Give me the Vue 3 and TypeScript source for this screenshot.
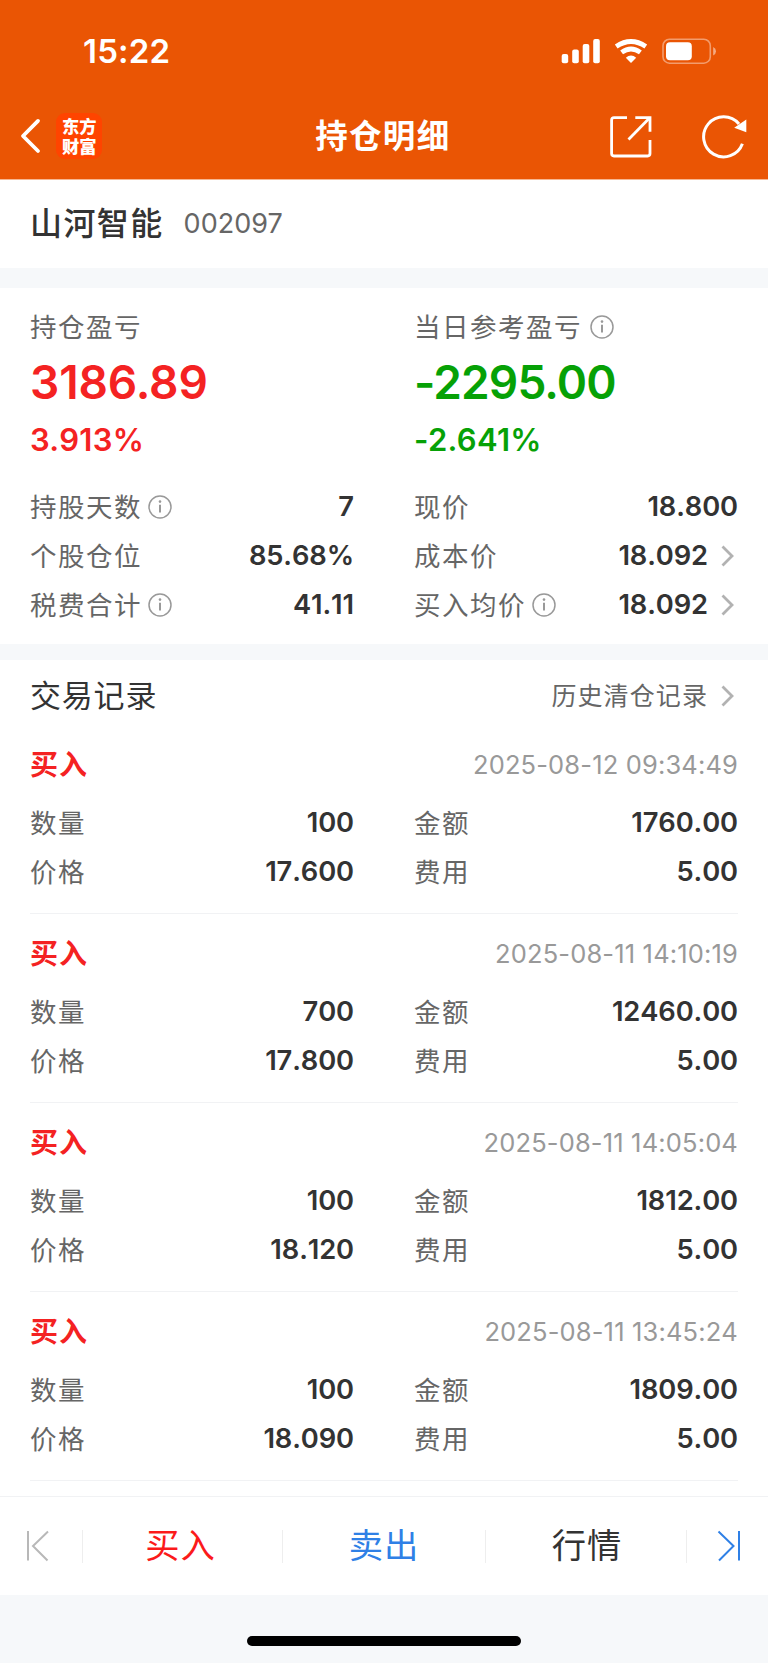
<script setup lang="ts">
interface Metric {
  label: string
  value: string
  info?: boolean
  link?: boolean
}

interface Trade {
  time: string
  fields: Metric[]
}

const metrics: Metric[] = [
  { label: '持股天数', value: '7', info: true },
  { label: '现价', value: '18.800' },
  { label: '个股仓位', value: '85.68%' },
  { label: '成本价', value: '18.092', link: true },
  { label: '税费合计', value: '41.11', info: true },
  { label: '买入均价', value: '18.092', info: true, link: true },
]

function trade(time: string, count: string, amount: string, price: string): Trade {
  return {
    time,
    fields: [
      { label: '数量', value: count },
      { label: '金额', value: amount },
      { label: '价格', value: price },
      { label: '费用', value: '5.00' },
    ],
  }
}

const trades: Trade[] = [
  trade('2025-08-12 09:34:49', '100', '1760.00', '17.600'),
  trade('2025-08-11 14:10:19', '700', '12460.00', '17.800'),
  trade('2025-08-11 14:05:04', '100', '1812.00', '18.120'),
  trade('2025-08-11 13:45:24', '100', '1809.00', '18.090'),
]
</script>

<template>
  <div class="screen">
    <header class="top">
      <div class="status">
        <span class="clock">15:22</span>
        <svg class="status-icons" width="156" height="28" viewBox="0 0 156 28">
          <g fill="#fff">
            <rect x="1.7" y="17" width="6.5" height="9.3" rx="2" />
            <rect x="12.2" y="12.4" width="6.6" height="13.9" rx="2" />
            <rect x="22.7" y="7" width="6.6" height="19.3" rx="2" />
            <rect x="33.2" y="2" width="6.6" height="24.3" rx="2" />
            <path d="M71 26 L65.8 20.8 Q71 16.4 76.2 20.8 Z" />
          </g>
          <path d="M56.2 9.5 Q71 -0.5 85.8 9.5" fill="none" stroke="#fff" stroke-width="4.8" />
          <path d="M61.6 15.4 Q71 8.6 80.4 15.4" fill="none" stroke="#fff" stroke-width="4.8" />
          <rect x="103" y="2.2" width="47.3" height="24" rx="6.5" fill="none" stroke="#fff" stroke-opacity=".42" stroke-width="1.6" />
          <rect x="106" y="5.2" width="25.8" height="18" rx="4" fill="#fff" />
          <path d="M153.2 10 Q156 11.4 156 14.2 Q156 17 153.2 18.4 Z" fill="#fff" fill-opacity=".5" />
        </svg>
      </div>
      <nav class="nav">
        <div class="nav-left">
          <svg class="back" width="22" height="36" viewBox="0 0 22 36">
            <path d="M18 2.9 L3 18 L18 33" fill="none" stroke="#fff" stroke-width="3.8" stroke-linecap="round" stroke-linejoin="round" />
          </svg>
          <div class="logo">东方财富</div>
        </div>
        <h1>持仓明细</h1>
        <div class="nav-right">
          <svg class="share" width="44" height="44" viewBox="0 0 44 44" fill="none" stroke="#fff" stroke-width="2.8">
            <path d="M18 2.6 H5 Q2.6 2.6 2.6 5 V38.6 Q2.6 41 5 41 H38.6 Q41 41 41 38.6 V25" />
            <path d="M26.3 2.6 H41 V16.7" />
            <path d="M41 2.6 L19.5 24.6" />
          </svg>
          <svg width="46" height="46" viewBox="0 0 46 46">
            <path d="M41.4 30.7 A20 20 0 1 1 38 11" fill="none" stroke="#fff" stroke-width="3" />
            <path d="M45.3 6.5 V19.2 L33.2 14.7 Z" fill="#fff" />
          </svg>
        </div>
      </nav>
    </header>

    <section class="stock">
      <h2>山河智能</h2>
      <span class="code">002097</span>
    </section>

    <section class="summary">
      <div class="profits">
        <div class="profit up">
          <div class="label">持仓盈亏</div>
          <div class="big">3186.89</div>
          <div class="rate">3.913%</div>
        </div>
        <div class="profit down">
          <div class="label">
            当日参考盈亏
            <svg class="info wide" width="24" height="24" viewBox="0 0 24 24">
              <circle cx="12" cy="12" r="11" fill="none" stroke="#999" stroke-width="1.5" />
              <path d="M12 9.8 V17.6" stroke="#999" stroke-width="2" />
              <circle cx="12" cy="6.6" r="1.3" fill="#999" />
            </svg>
          </div>
          <div class="big">-2295.00</div>
          <div class="rate">-2.641%</div>
        </div>
      </div>
      <div class="grid">
        <div v-for="m in metrics" :key="m.label" class="cell">
          <span class="label">
            {{ m.label }}
            <svg v-if="m.info" class="info" width="24" height="24" viewBox="0 0 24 24">
              <circle cx="12" cy="12" r="11" fill="none" stroke="#999" stroke-width="1.5" />
              <path d="M12 9.8 V17.6" stroke="#999" stroke-width="2" />
              <circle cx="12" cy="6.6" r="1.3" fill="#999" />
            </svg>
          </span>
          <span class="value">
            {{ m.value }}
            <svg v-if="m.link" class="chevron" width="13" height="22" viewBox="0 0 13 22">
              <path d="M1.5 1.5 L11 11 L1.5 20.5" fill="none" stroke="#b2b2b2" stroke-width="2.8" />
            </svg>
          </span>
        </div>
      </div>
    </section>

    <section class="records">
      <div class="records-head">
        <h3>交易记录</h3>
        <span class="history">
          历史清仓记录
          <svg class="chevron" width="13" height="22" viewBox="0 0 13 22">
            <path d="M1.5 1.5 L11 11 L1.5 20.5" fill="none" stroke="#b2b2b2" stroke-width="2.8" />
          </svg>
        </span>
      </div>
      <article v-for="t in trades" :key="t.time" class="trade">
        <div class="trade-head">
          <b>买入</b>
          <time>{{ t.time }}</time>
        </div>
        <div class="grid">
          <div v-for="f in t.fields" :key="f.label" class="cell">
            <span class="label">{{ f.label }}</span>
            <span class="value">{{ f.value }}</span>
          </div>
        </div>
      </article>
    </section>

    <footer class="bar">
      <div class="edge">
        <svg width="24" height="32" viewBox="0 0 24 32" fill="none" stroke="#b8b8b8" stroke-width="2">
          <path d="M2 1 V30.5 M22 1.5 L7 16 L21.5 30.5" />
        </svg>
      </div>
      <div class="action buy">买入</div>
      <div class="action sell">卖出</div>
      <div class="action quote">行情</div>
      <div class="edge last">
        <svg width="24" height="32" viewBox="0 0 24 32" fill="none" stroke="#2f80e6" stroke-width="2">
          <path d="M22 1 V30.5 M1.5 1.5 L16.5 16 L2 30.5" />
        </svg>
      </div>
    </footer>
    <div class="home"><i></i></div>
  </div>
</template>

<style>
body {
  margin: 0;
}
</style>

<style scoped>
.screen {
  width: 768px;
  height: 1663px;
  display: flex;
  flex-direction: column;
  overflow: hidden;
  background: #f6f8fa;
  color: #333;
  font-family: Inter, 'Noto Sans CJK SC', sans-serif;
}

svg {
  display: block;
  flex: none;
}

h1,
h2,
h3 {
  margin: 0;
}

section {
  box-sizing: border-box;
  padding: 0 30px;
  background: #fff;
}

.top {
  box-sizing: border-box;
  height: 180px;
  background: #ea5504;
  border-bottom: 1px solid #f6b692;
  color: #fff;
}

.status {
  height: 96px;
  display: flex;
  justify-content: space-between;
  padding: 0 52px 0 83px;
}

.clock {
  margin-top: 30px;
  font-size: 33px;
  line-height: 42px;
  font-weight: 600;
  letter-spacing: 0.2px;
}

.status-icons {
  margin-top: 37px;
}

.nav {
  height: 80px;
  display: grid;
  grid-template-columns: 1fr auto 1fr;
  align-items: center;
}

.nav-left {
  display: flex;
  align-items: center;
  padding-left: 20px;
}

.logo {
  box-sizing: border-box;
  width: 46px;
  height: 46px;
  margin-left: 14px;
  padding: 3px 5px 0 6px;
  border-radius: 9px;
  background: #ff4400;
  font-family: 'Noto Sans CJK SC', sans-serif;
  font-size: 17.3px;
  line-height: 19.5px;
  font-weight: 900;
  word-break: break-all;
}

h1 {
  padding-top: 2px;
  font-size: 32.5px;
  line-height: 48px;
  font-weight: 600;
  letter-spacing: 1.3px;
  margin: 0 0.5px 0 -1.8px;
}

.nav-right {
  display: flex;
  justify-content: flex-end;
  align-items: center;
  gap: 48px;
  padding-right: 21px;
}

.share {
  margin-top: 2px;
}

.stock {
  height: 88px;
  margin-bottom: 20px;
  display: flex;
  align-items: center;
}

h2 {
  font-size: 32px;
  line-height: 48px;
  font-weight: 500;
  letter-spacing: 1.4px;
  margin-right: 20px;
}

.code {
  padding-bottom: 2px;
  font-size: 27px;
  color: #666;
}

.summary {
  height: 356px;
  margin-bottom: 16px;
}

.profits,
.grid {
  display: grid;
  grid-template-columns: 324px 324px;
  column-gap: 60px;
}

.profits {
  padding: 19px 0 24px;
}

.label {
  display: flex;
  align-items: center;
  color: #666;
  font-size: 26.5px;
  line-height: 40px;
  letter-spacing: 1.5px;
}

.info {
  margin-left: 5.5px;
}

.info.wide {
  margin-left: 8px;
}

.big {
  height: 68px;
  margin-top: 1px;
  line-height: 68px;
  font-size: 46px;
  font-weight: 600;
  letter-spacing: -0.1px;
}

.down .big {
  letter-spacing: -0.9px;
}

.rate {
  height: 42px;
  line-height: 42px;
  margin-top: 2px;
  padding-top: 1px;
  margin-bottom: -1px;
  font-size: 31px;
  font-weight: 600;
  letter-spacing: 0.3px;
}

.up {
  color: #f42222;
}

.down {
  color: #06a106;
}

.profits + .grid {
  margin-top: -2px;
}

.cell {
  height: 49px;
  display: flex;
  align-items: center;
  justify-content: space-between;
}

.value {
  display: flex;
  align-items: center;
  font-size: 27.3px;
  font-weight: 600;
  font-kerning: none;
  letter-spacing: -0.1px;
}

.chevron {
  margin: 0 4px 0 13px;
}

.records {
  height: 836px;
}

.records-head {
  box-sizing: border-box;
  height: 65px;
  padding-top: 6px;
  display: flex;
  align-items: center;
  justify-content: space-between;
}

h3 {
  font-size: 31px;
  line-height: 46px;
  font-weight: 400;
  letter-spacing: 0.8px;
}

.history {
  display: flex;
  align-items: center;
  color: #666;
  font-size: 25px;
  line-height: 40px;
  letter-spacing: 1.1px;
}

.trade {
  padding: 19px 0 16px;
  border-bottom: 1px solid #f1f2f4;
}

.trade-head {
  height: 40px;
  margin-bottom: 14px;
  padding-top: 1px;
  box-sizing: border-box;
  display: flex;
  align-items: center;
  justify-content: space-between;
}

.trade .grid {
  padding-bottom: 1px;
}

.trade-head b {
  padding-top: 1px;
  color: #f42222;
  font-size: 28px;
  line-height: 40px;
  letter-spacing: 1px;
}

time {
  color: #999;
  font-size: 25.5px;
  font-kerning: none;
  letter-spacing: 0.15px;
}

.bar {
  box-sizing: border-box;
  height: 99px;
  border-top: 1px solid #f1f2f4;
  background: #fff;
  display: grid;
  grid-template-columns: 83px 200px 203px 201px 81px;
  align-items: center;
}

.edge,
.action {
  box-sizing: border-box;
  height: 33px;
  display: flex;
  align-items: center;
  justify-content: center;
  border-right: 1px solid #eee;
}

.edge {
  padding-right: 6px;
}

.edge.last {
  border: 0;
  padding: 0 0 0 2px;
}

.action {
  padding-bottom: 2px;
  font-size: 34.3px;
  line-height: 33px;
  letter-spacing: 1px;
}

.buy {
  padding-right: 4px;
  color: #fb1a1a;
}

.sell {
  color: #2f80e6;
}

.quote {
  padding-left: 2px;
}

.home {
  flex: 1;
  display: flex;
  justify-content: center;
  padding-top: 41px;
}

.home i {
  width: 274px;
  height: 10px;
  border-radius: 5px;
  background: #000;
}
</style>
